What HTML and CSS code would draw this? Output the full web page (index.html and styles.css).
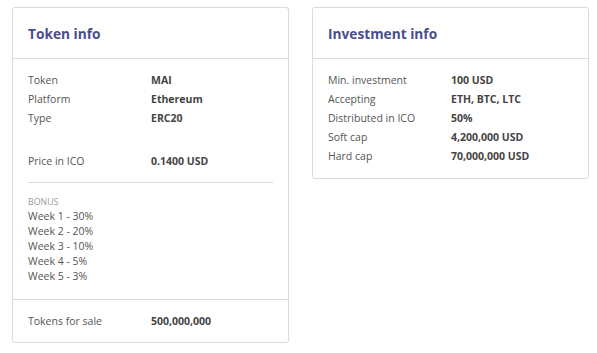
FILE: index.html
```html
<!DOCTYPE html>
<html>
<head>
<meta charset="utf-8">
<link rel="stylesheet" href="styles.css">
</head>
<body>
<div class="page">
  <section class="card">
    <h2 class="card-title">Token info</h2>
    <div class="card-body">
      <div class="row"><span class="label">Token</span><span class="value">MAI</span></div>
      <div class="row"><span class="label">Platform</span><span class="value">Ethereum</span></div>
      <div class="row"><span class="label">Type</span><span class="value">ERC20</span></div>
      <div class="row price"><span class="label">Price in ICO</span><span class="value">0.1400 USD</span></div>
      <hr class="divider">
      <div class="bonus">
        <div class="bonus-title">BONUS</div>
        <div class="bonus-line">Week 1 - 30%</div>
        <div class="bonus-line">Week 2 - 20%</div>
        <div class="bonus-line">Week 3 - 10%</div>
        <div class="bonus-line">Week 4 - 5%</div>
        <div class="bonus-line">Week 5 - 3%</div>
      </div>
    </div>
    <div class="card-footer">
      <div class="row"><span class="label">Tokens for sale</span><span class="value">500,000,000</span></div>
    </div>
  </section>
  <section class="card">
    <h2 class="card-title">Investment info</h2>
    <div class="card-body">
      <div class="row"><span class="label">Min. investment</span><span class="value">100 USD</span></div>
      <div class="row"><span class="label">Accepting</span><span class="value">ETH, BTC, LTC</span></div>
      <div class="row"><span class="label">Distributed in ICO</span><span class="value">50%</span></div>
      <div class="row"><span class="label">Soft cap</span><span class="value">4,200,000 USD</span></div>
      <div class="row"><span class="label">Hard cap</span><span class="value">70,000,000 USD</span></div>
    </div>
  </section>
</div>
</body>
</html>
```
FILE: styles.css
```css
html, body {
  margin: 0;
  padding: 0;
  background: #ffffff;
}
body {
  font-family: "Open Sans", "Noto Sans", sans-serif;
  font-size: 10.5px;
  color: #555555;
}
.page {
  display: flex;
  align-items: flex-start;
  gap: 23px;
  padding: 7px 8px 0 12px;
}
.card {
  width: 277px;
  box-sizing: border-box;
  border: 1px solid #dcdcdc;
  border-radius: 3px;
  background: #fff;
  box-shadow: 0 0 2px rgba(0,0,0,0.04);
}
.card-title {
  margin: 0;
  padding: 15px 15px 14px;
  font-size: 13.7px;
  line-height: 21px;
  font-weight: 700;
  color: #4a4e8d;
  border-bottom: 1px solid #dcdcdc;
}
.card-body {
  padding: 12px 15px 12px;
}
.row {
  display: flex;
  line-height: 19px;
}
.label {
  width: 123px;
  flex: none;
  color: #555555;
}
.value {
  font-weight: 700;
  color: #444444;
}
.row.price {
  margin-top: 24px;
}
.divider {
  border: 0;
  border-top: 1px solid #dcdcdc;
  margin: 11px 0 12px;
}
.bonus-title {
  font-size: 8.8px;
  line-height: 14px;
  color: #9a9a9a;
}
.bonus-line {
  line-height: 15px;
}
.bonus {
  padding-bottom: 3px;
}
.card-footer {
  border-top: 1px solid #dcdcdc;
  padding: 12px 15px 11px;
}
```
